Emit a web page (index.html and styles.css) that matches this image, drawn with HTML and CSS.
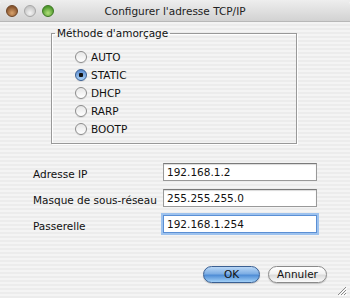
FILE: index.html
```html
<!DOCTYPE html>
<html lang="fr">
<head>
    <meta charset="UTF-8">
    <title>Configurer l'adresse TCP/IP</title>
    <link rel="stylesheet" href="styles.css">
</head>
<body>
    <div class="window">
        <div class="titlebar">
            <div class="lights">
                <span class="light close"></span>
                <span class="light mini"></span>
                <span class="light zoom"></span>
            </div>
            <div class="title">Configurer l'adresse TCP/IP</div>
        </div>

        <fieldset class="group">
            <legend>Méthode d'amorçage</legend>
            <div class="radio-row"><span class="radio"></span>AUTO</div>
            <div class="radio-row"><span class="radio on"></span>STATIC</div>
            <div class="radio-row"><span class="radio"></span>DHCP</div>
            <div class="radio-row"><span class="radio"></span>RARP</div>
            <div class="radio-row"><span class="radio"></span>BOOTP</div>
        </fieldset>

        <div class="fields">
            <label>Adresse IP</label>
            <div class="input">192.168.1.2</div>
            <label>Masque de sous-réseau</label>
            <div class="input">255.255.255.0</div>
            <label>Passerelle</label>
            <div class="input focus">192.168.1.254</div>
        </div>

        <div class="buttons">
            <div class="btn default">OK</div>
            <div class="btn">Annuler</div>
        </div>

        <svg class="grip" width="10" height="10" viewBox="0 0 10 10">
            <path d="M9 1 L1 9 M9 4 L4 9 M9 7 L7 9" stroke="#8a8a8a" stroke-width="1"/>
            <path d="M10 2 L2 10 M10 5 L5 10 M10 8 L8 10" stroke="#ffffff" stroke-width="1"/>
        </svg>
    </div>
</body>
</html>
```

FILE: styles.css
```css
body {
    margin: 0;
    font-family: "DejaVu Sans", "Liberation Sans", sans-serif;
    font-size: 10.5px;
    color: #111;
}
.window {
    position: relative;
    width: 350px;
    height: 298px;
    overflow: hidden;
    background: repeating-linear-gradient(#ececec 0 2px, #f4f4f4 2px 4px);
}
.titlebar {
    display: flex;
    align-items: center;
    height: 21px;
    border-bottom: 1px solid #b8b8b8;
    border-radius: 5px 5px 0 0;
    background: linear-gradient(#eeeeee, #d2d2d2);
}
.lights {
    display: flex;
    gap: 6px;
    padding-left: 6px;
    width: 60px;
}
.light {
    width: 12px;
    height: 12px;
    border-radius: 50%;
    border: 1px solid #8a8a8a;
    box-sizing: border-box;
}
.close {
    background: radial-gradient(circle at 50% 70%, #d9a36c, #8a5630 70%);
    border-color: #6e4424;
}
.mini {
    background: radial-gradient(circle at 50% 70%, #f4f4f4, #c8c8c8 70%);
    border-color: #a6a6a6;
}
.zoom {
    background: radial-gradient(circle at 50% 70%, #b2e07a, #4f9a2e 70%);
    border-color: #3c7622;
}
.title {
    flex: 1;
    text-align: center;
    margin-right: 66px;
    font-size: 10.5px;
    color: #222;
}
.group {
    margin: 5px 0 0 51px;
    width: 246px;
    box-sizing: border-box;
    padding: 8px 0 5px 23px;
    border: 1px solid #999;
    box-shadow: 1px 1px 0 #fff, inset 1px 1px 0 #fff;
}
.group legend {
    margin-left: -20px;
    padding: 0 2px;
    line-height: 13px;
}
.radio-row {
    display: flex;
    align-items: center;
    gap: 4px;
    height: 18px;
}
.radio {
    width: 12px;
    height: 12px;
    box-sizing: border-box;
    border-radius: 50%;
    border: 1px solid #8c8c8c;
    background: linear-gradient(#e6e6e6, #ffffff);
    box-shadow: 0 1px 0 rgba(0,0,0,0.08);
}
.radio.on {
    border-color: #3a5f92;
    background: radial-gradient(circle, #111 0 2px, transparent 2.5px),
                linear-gradient(#5b8cd0, #a9d0f5);
}
.fields {
    display: grid;
    grid-template-columns: 130px 154px;
    row-gap: 8px;
    margin-top: 19px;
    padding-left: 33px;
}
.fields label {
    display: flex;
    align-items: center;
    padding-top: 3px;
}
.input {
    height: 18px;
    box-sizing: border-box;
    padding: 0 3px;
    line-height: 16px;
    background: #fff;
    border: 1px solid #999;
    border-top-color: #7a7a7a;
    box-shadow: inset 0 1px 1px rgba(0,0,0,0.15);
}
.input.focus {
    border-color: #5b8fd4;
    box-shadow: 0 0 0 2px #9dc2ee;
}
.buttons {
    display: flex;
    justify-content: flex-end;
    gap: 8px;
    margin-top: 33px;
    padding-right: 23px;
}
.btn {
    height: 17px;
    width: 59px;
    box-sizing: border-box;
    border-radius: 9px;
    border: 1px solid #8a8a8a;
    background: linear-gradient(#ffffff, #f2f2f2 45%, #dcdcdc 55%, #fbfbfb);
    text-align: center;
    line-height: 15px;
    box-shadow: 0 1px 1px rgba(0,0,0,0.2);
}
.btn.default {
    width: 57px;
    border-color: #3a5f92;
    background: linear-gradient(#b9d7f6, #7eaee4 45%, #4f8dd6 55%, #a2d0f7);
}
.grip {
    position: absolute;
    right: 3px;
    bottom: 2px;
}
```
